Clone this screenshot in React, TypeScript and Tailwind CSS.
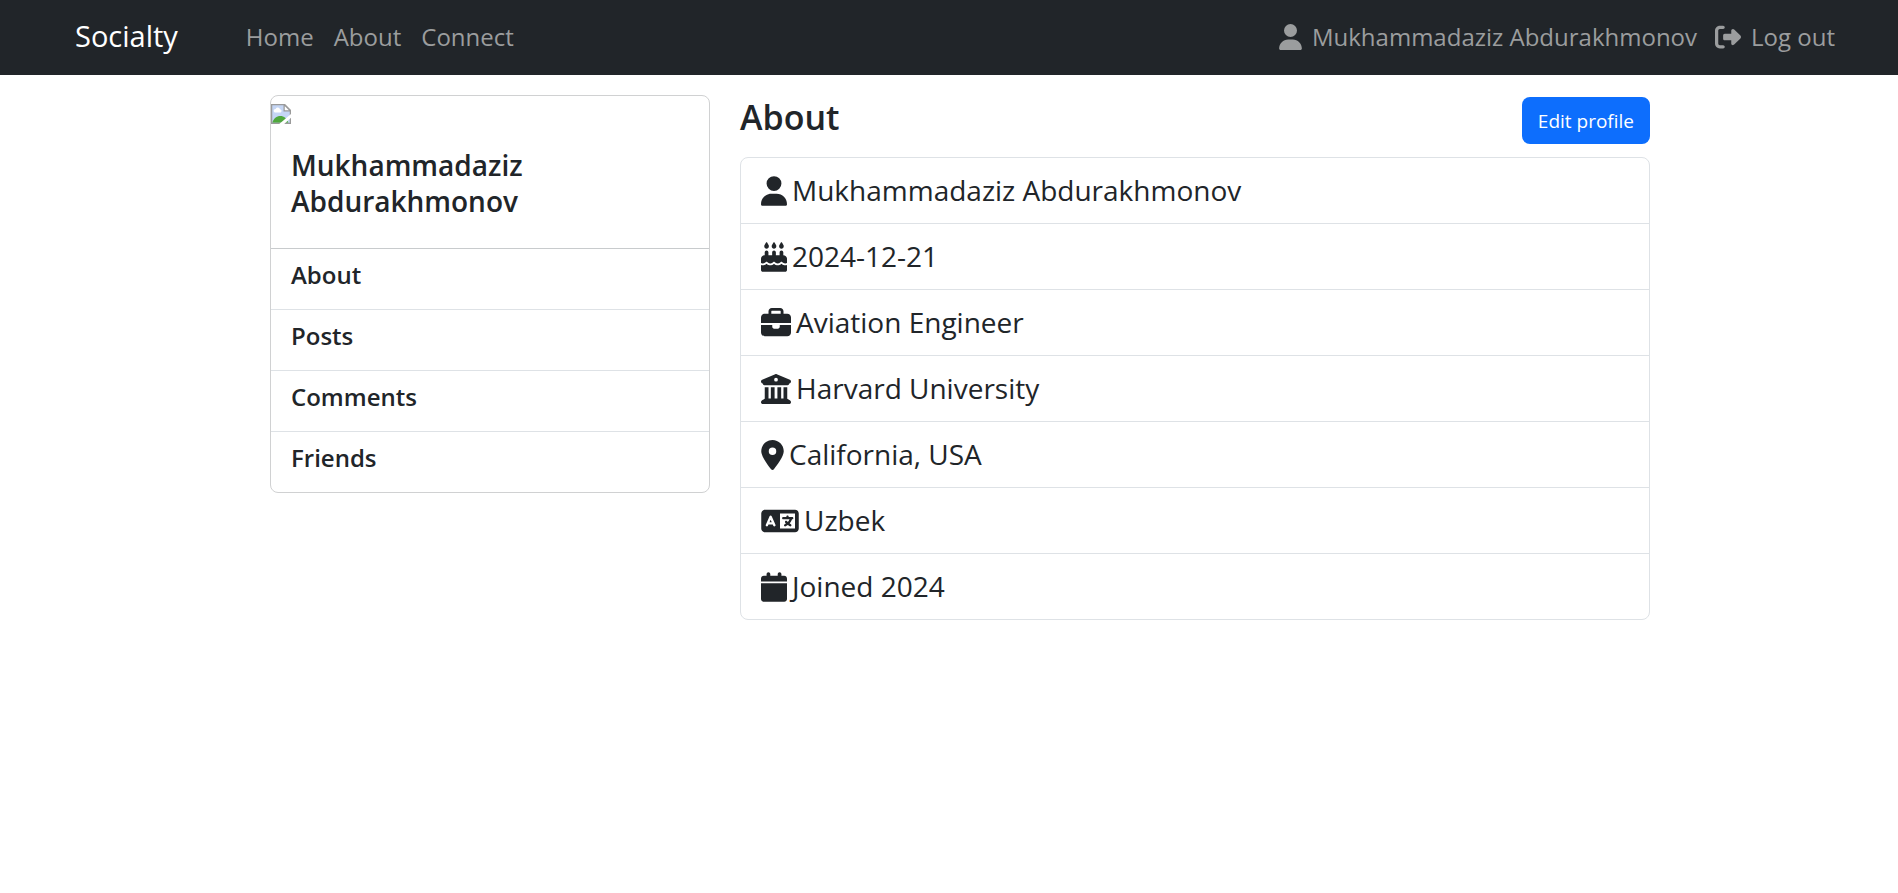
import type { ComponentType } from "react";
import {
  FaBriefcase,
  FaBuildingColumns,
  FaCakeCandles,
  FaCalendar,
  FaLanguage,
  FaLocationDot,
  FaRightFromBracket,
  FaUser,
} from "react-icons/fa6";

type Detail = {
  icon: ComponentType<{ className?: string }>;
  iconClass: string;
  text: string;
};

const navLinks = ["Home", "About", "Connect"];
const sections = ["About", "Posts", "Comments", "Friends"];

const details: Detail[] = [
  { icon: FaUser, iconClass: "h-[30px] w-[26px]", text: "Mukhammadaziz Abdurakhmonov" },
  { icon: FaCakeCandles, iconClass: "h-[30px] w-[26px]", text: "2024-12-21" },
  { icon: FaBriefcase, iconClass: "h-[30px] w-[30px]", text: "Aviation Engineer" },
  { icon: FaBuildingColumns, iconClass: "h-[30px] w-[30px]", text: "Harvard University" },
  { icon: FaLocationDot, iconClass: "h-[30px] w-[23px]", text: "California, USA" },
  { icon: FaLanguage, iconClass: "h-[30px] w-[38px]", text: "Uzbek" },
  { icon: FaCalendar, iconClass: "h-[30px] w-[26px]", text: "Joined 2024" },
];

function MissingPicture() {
  return (
    <svg viewBox="0 0 16 16" className="size-5" role="img" aria-label="Profile picture">
      <path d="M0.5 0.5H11L15.5 5V15.5H0.5Z" fill="#c5d6f5" />
      <path d="M2.3 6.2a1.6 1.6 0 0 1 1.4-2.3 1.9 1.9 0 0 1 3.5.3 1.4 1.4 0 0 1 .6 2.6H3Z" fill="#fff" />
      <path d="M1 15C2 11.500 4.500 9.500 7.500 9.500S12.500 11.500 14 15Z" fill="#4fa83d" />
      <path d="M0.5 16V0.5H11L15.500 5V16M0 15.500H16" fill="none" stroke="#9a9a9a" />
      <path d="M10.500 0.500V5.500H15.500Z" fill="#fff" stroke="#9a9a9a" />
      <path d="M16.500 7.500V10.500L10 16.500H6Z" fill="#fff" />
    </svg>
  );
}

export default function App() {
  return (
    <div className="min-h-screen bg-white font-['Open_Sans','Noto_Sans',sans-serif] text-[#212529]">
      <nav className="flex h-[75px] items-center bg-[#212529] pr-[63px] pb-0.5 pl-[75px] text-2xl text-[#9b9d9e]">
        <a href="#home" className="mr-[68px] text-[29px] text-white">
          Socialty
        </a>
        <ul className="flex gap-5">
          {navLinks.map((label) => (
            <li key={label}>
              <a href={`#${label.toLowerCase()}`}>{label}</a>
            </li>
          ))}
        </ul>
        <ul className="ml-auto flex gap-[18px]">
          <li>
            <a href="#profile" className="flex items-center gap-2.5">
              <FaUser className="h-[26px] w-[23px]" />
              Mukhammadaziz Abdurakhmonov
            </a>
          </li>
          <li>
            <a href="#logout" className="flex items-center gap-2.5">
              <FaRightFromBracket className="size-[26px]" />
              Log out
            </a>
          </li>
        </ul>
      </nav>

      <main className="pl-[22px]">
        <div className="mx-auto grid max-w-[1380px] grid-cols-[440fr_910fr] items-start gap-[30px] pt-5">
          <aside className="rounded-lg border border-[#d0d1d2]">
            <div className="pt-2">
              <MissingPicture />
            </div>
            <div className="px-5 pt-[23px] pb-[29px]">
              <h2 className="text-[28px] leading-9 font-semibold">
                Mukhammadaziz
                <br />
                Abdurakhmonov
              </h2>
            </div>
            <ul className="divide-y divide-[#dee2e6] border-t border-[#c8cbcd]">
              {sections.map((label) => (
                <li key={label} className="px-5 pt-[11px] pb-[19px]">
                  <a href={`#${label.toLowerCase()}`} className="block text-2xl leading-[30px] font-semibold">
                    {label}
                  </a>
                </li>
              ))}
            </ul>
          </aside>

          <section>
            <div className="flex h-[62px] items-start justify-between pt-0.5">
              <h1 className="text-[34px] leading-10 font-semibold">About</h1>
              <button type="button" className="h-[47px] rounded-lg bg-[#0d6efd] px-4 pt-0.5 text-[19px] text-white">
                Edit profile
              </button>
            </div>
            <ul className="divide-y divide-[#dee2e6] rounded-lg border border-[#dee2e6]">
              {details.map(({ icon: Icon, iconClass, text }) => (
                <li key={text} className="flex items-center gap-[5px] px-5 py-3 text-[28px] leading-[41px]">
                  <Icon className={iconClass} />
                  {text}
                </li>
              ))}
            </ul>
          </section>
        </div>
      </main>
    </div>
  );
}
